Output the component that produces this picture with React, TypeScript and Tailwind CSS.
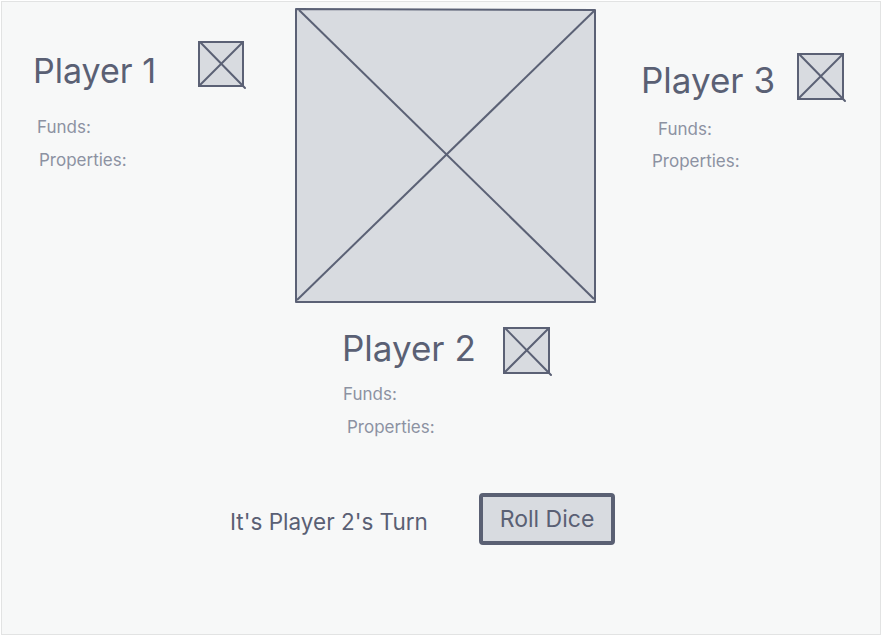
import React from 'react';

const ink = '#5b6175';
const fill = '#d8dbe0';

function PlaceholderBox({ w, h, stroke = 2 }: { w: number; h: number; stroke?: number }) {
  const s = stroke / 2;
  return (
    <svg width={w} height={h} viewBox={`0 0 ${w} ${h}`} className="block shrink-0 overflow-visible">
      <rect x={s} y={s} width={w - stroke} height={h - stroke} fill={fill} stroke={ink} strokeWidth={stroke} />
      <line x1={s + 1} y1={s} x2={w + 1} y2={h + 1} stroke={ink} strokeWidth={stroke} strokeLinecap="round" />
      <line x1={w - s} y1={s} x2={s} y2={h - s} stroke={ink} strokeWidth={stroke} strokeLinecap="round" />
    </svg>
  );
}

function Board() {
  return (
    <svg width={301} height={295} viewBox="0 0 301 295" className="block">
      <path d="M1 1 L300 2 L300 294 L1 294 Z" fill={fill} stroke={ink} strokeWidth={2} strokeLinejoin="round" />
      <line x1={4} y1={2} x2={299} y2={291} stroke={ink} strokeWidth={2} />
      <line x1={299} y1={3} x2={2} y2={292} stroke={ink} strokeWidth={2} />
    </svg>
  );
}

export default function App() {
  return (
    <div className="w-[882px] h-[636px] bg-white p-px" style={{ fontFamily: 'Inter, "Noto Sans", sans-serif' }}>
      <div className="h-[634px] border border-[#e2e3e3] bg-[#f7f8f8] text-[#5a6074]">
        {/* top row: player 1 | board + player 2 | player 3 */}
        <div className="flex">
          <div className="w-[293px] pl-[31px] pt-[39px]">
            <div className="flex items-start">
              <h2 className="w-[165px] mt-[13px] text-[34px] leading-none">Player 1</h2>
              <PlaceholderBox w={46} h={46} />
            </div>
            <p className="mt-[31px] ml-[4px] text-[17px] leading-none text-[#8c92a2]">Funds:</p>
            <p className="mt-[16px] ml-[6px] text-[17px] leading-none text-[#8c92a2]">Properties:</p>
          </div>

          <div className="w-[301px] pt-[6px]">
            <Board />
            <div className="pl-[47px] mt-[24px]">
              <div className="flex items-start">
                <h2 className="w-[161px] mt-[4px] text-[35px] leading-none">Player 2</h2>
                <PlaceholderBox w={47} h={47} />
              </div>
              <p className="mt-[12px] ml-[1px] text-[17px] leading-none text-[#8c92a2]">Funds:</p>
              <p className="mt-[16px] ml-[5px] text-[17px] leading-none text-[#8c92a2]">Properties:</p>
            </div>
          </div>

          <div className="flex-1 pl-[45px] pt-[51px]">
            <div className="flex items-start">
              <h2 className="w-[156px] mt-[10px] text-[35px] leading-none">Player 3</h2>
              <PlaceholderBox w={47} h={47} />
            </div>
            <p className="mt-[21px] ml-[17px] text-[17px] leading-none text-[#8c92a2]">Funds:</p>
            <p className="mt-[15px] ml-[11px] text-[17px] leading-none text-[#8c92a2]">Properties:</p>
          </div>
        </div>

        {/* turn indicator */}
        <div className="flex items-start pl-[228px] mt-[57px]">
          <p className="w-[249px] mt-[18px] text-[22.5px] leading-none">It's Player 2's Turn</p>
          <button className="w-[136px] h-[52px] border-4 border-[#5a6073] rounded-[4px] bg-[#d8dbe0] text-[23px] leading-none text-[#5a6074]">
            Roll Dice
          </button>
        </div>
      </div>
    </div>
  );
}
